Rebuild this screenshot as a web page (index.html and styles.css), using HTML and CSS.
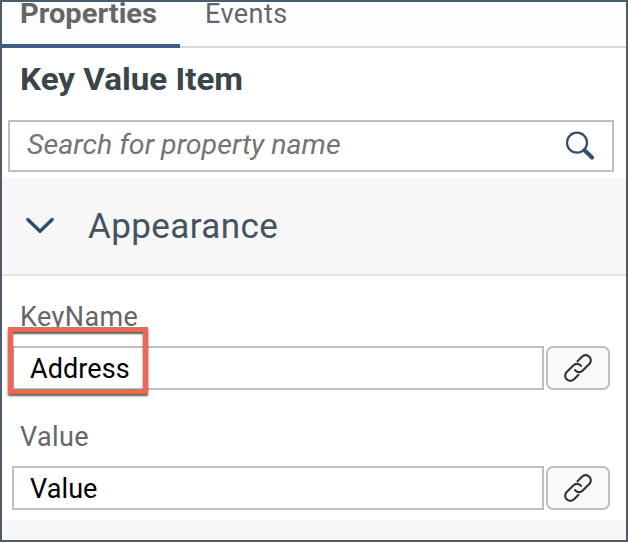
FILE: index.html
```html
<!DOCTYPE html>
<html lang="en">
<head>
<meta charset="utf-8">
<title>Properties</title>
<link rel="stylesheet" href="styles.css">
</head>
<body>
<main class="panel">
  <nav class="tabs">
    <div class="tab active"><span>Properties</span></div>
    <div class="tab"><span>Events</span></div>
  </nav>
  <h1 class="title">Key Value Item</h1>
  <div class="search">
    <span class="placeholder">Search for property name</span>
    <svg class="search-icon" width="32" height="32" viewBox="0 0 32 32" fill="none" stroke="#354f69">
      <circle cx="13" cy="12.7" r="10" stroke-width="2.2"/>
      <path d="M20.5 20.3L28 27.5" stroke-width="4.2" stroke-linecap="round"/>
    </svg>
  </div>
  <section class="group">
    <svg class="chevron" width="30" height="18" viewBox="0 0 30 18" fill="none" stroke="#2f4c6b" stroke-width="3.4" stroke-linecap="round" stroke-linejoin="round">
      <path d="M2.8 2.6L15 14.2L27.2 2.6"/>
    </svg>
    <h2 class="group-name">Appearance</h2>
  </section>
  <section class="fields">
    <div class="field">
      <div class="label">KeyName</div>
      <div class="row">
        <div class="input"><span>Address</span></div>
        <div class="link-button">
          <svg width="32" height="32" viewBox="0 0 32 32" fill="none" stroke="#303236" stroke-width="2.1" stroke-linecap="round" stroke-linejoin="round">
            <g transform="rotate(-45 16 16)">
              <path d="M20.5 10.8H26.8a5.2 5.2 0 0 1 0 10.4H17.5A5.2 5.2 0 0 1 12.3 15.4"/>
              <path d="M11.5 21.2H5.2a5.2 5.2 0 0 1 0-10.4H14.5A5.2 5.2 0 0 1 19.7 16.6"/>
            </g>
          </svg>
        </div>
      </div>
      <div class="highlight"></div>
    </div>
    <div class="field">
      <div class="label">Value</div>
      <div class="row">
        <div class="input"><span>Value</span></div>
        <div class="link-button">
          <svg width="32" height="32" viewBox="0 0 32 32" fill="none" stroke="#303236" stroke-width="2.1" stroke-linecap="round" stroke-linejoin="round">
            <g transform="rotate(-45 16 16)">
              <path d="M20.5 10.8H26.8a5.2 5.2 0 0 1 0 10.4H17.5A5.2 5.2 0 0 1 12.3 15.4"/>
              <path d="M11.5 21.2H5.2a5.2 5.2 0 0 1 0-10.4H14.5A5.2 5.2 0 0 1 19.7 16.6"/>
            </g>
          </svg>
        </div>
      </div>
    </div>
  </section>
  <div class="next-group"></div>
</main>
</body>
</html>
```

FILE: styles.css
```css
* { box-sizing: border-box; }

body {
  margin: 0;
  font-family: Roboto, sans-serif;
  font-size: 27px;
  line-height: 32px;
  color: #000;
  white-space: nowrap;
}

.panel {
  display: flex;
  flex-direction: column;
  width: 628px;
  height: 542px;
  border: 2px solid #4c5c69;
  background: #fff;
  overflow: hidden;
}

.tabs {
  display: flex;
  flex: none;
  height: 46px;
  background: #fcfdfe;
  box-shadow: inset 0 -2px #d9dadd;
  color: #666;
}

.tab {
  height: 46px;
  padding: 0 25px;
  letter-spacing: .45px;
}

.tab span {
  display: block;
  height: 28px;
  line-height: 25px;
}

.tab.active {
  width: 178px;
  padding: 0 0 0 18px;
  border-bottom: 4px solid #3c5f88;
  font-weight: 700;
  letter-spacing: 0;
}

.tab.active span {
  width: 127px;
  transform: scaleX(1.077);
  transform-origin: left;
}

.title {
  flex: none;
  width: 500px;
  height: 72px;
  margin: 0;
  padding-top: 16px;
  margin-left: 18px;
  font-size: 31px;
  font-weight: 700;
  transform: scaleX(1.07);
  transform-origin: left;
  color: #3b444a;
}

.search {
  display: flex;
  flex: none;
  align-items: center;
  justify-content: space-between;
  height: 52px;
  margin: 0 12px 0 6px;
  padding: 0 16px 0 17px;
  border: 2px solid #bfbfbf;
}

.placeholder {
  font-style: italic;
  transform: scaleX(1.059);
  transform-origin: left;
  color: #747474;
  padding-bottom: 3px;
}

.group {
  display: flex;
  flex: none;
  align-items: center;
  gap: 33px;
  height: 98px;
  margin-top: 6px;
  padding: 0 23px;
  background: #f7f7f7;
  border-bottom: 2px solid #e5e5e5;
}

.group-name {
  margin: 0;
  padding-top: 1px;
  font-size: 35px;
  font-weight: 400;
  line-height: 42px;
  letter-spacing: .4px;
  color: #435362;
}

.fields {
  display: flex;
  flex-direction: column;
  gap: 16px;
  padding-top: 10px;
}

.field {
  position: relative;
  height: 104px;
  padding: 15px 16px 0 10px;
}

.label {
  height: 45px;
  padding-left: 8px;
  letter-spacing: .4px;
  color: #666;
}

.row { display: flex; gap: 2px; }

.input {
  width: 532px;
  height: 44px;
  padding: 5px 16px 0;
  border: 2px solid #bfbfbf;
  letter-spacing: .1px;
}

.link-button {
  display: flex;
  align-items: center;
  justify-content: center;
  width: 64px;
  height: 44px;
  border: 2px solid #bfbfbf;
  border-radius: 7px;
  background: #f8fafa;
}

.highlight {
  position: absolute;
  left: 6px;
  top: 41px;
  width: 140px;
  height: 67px;
  border: 5px solid #f06553;
  box-shadow: 0 2px 2px rgba(0, 0, 0, .65), inset 0 2px 2px rgba(0, 0, 0, .65);
}

.next-group {
  flex: 1;
  margin-top: 10px;
  background: #f7f7f7;
}
```
